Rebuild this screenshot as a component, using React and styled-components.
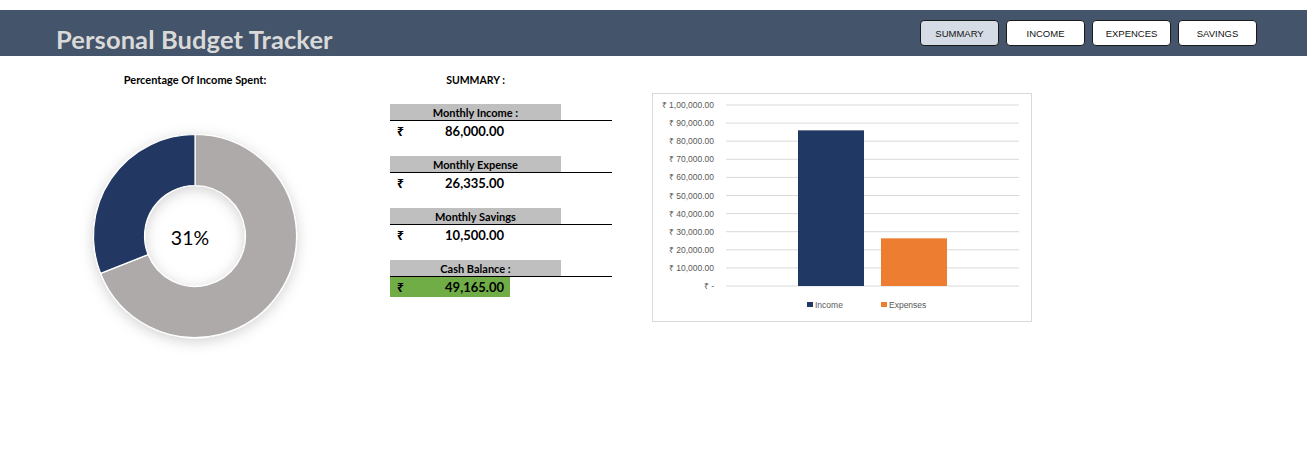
import React from 'react'
import styled, { createGlobalStyle } from 'styled-components';

const GlobalStyle = createGlobalStyle`
  body {
    margin: 0;
    background: #ffffff;
    font-family: Lato, "Open Sans", sans-serif;
    color: #000;
  }
`;

const Page = styled.div`
  width: 1307px;
  height: 473px;
  padding-top: 10px;
  box-sizing: border-box;
`;

const Header = styled.header`
  height: 46px;
  background-color: #44546a;
  display: flex;
  align-items: flex-start;
  justify-content: space-between;
  padding: 0 50px 0 56px;
  box-sizing: border-box;
`;

const Title = styled.h1`
  margin: 0;
  padding-top: 15px;
  font-size: 25.5px;
  line-height: 28px;
  font-weight: 700;
  color: #d9d9d9;
  letter-spacing: 0.1px;
`;

const Nav = styled.nav`
  display: flex;
  gap: 7px;
  padding-top: 10px;
`;

const NavButton = styled.button`
  width: 79px;
  height: 26px;
  padding: 0;
  border: 1px solid #1a1a1a;
  border-radius: 4px;
  background: ${p => (p.$active ? '#d6dce5' : '#ffffff')};
  font-family: "Liberation Sans", Arial, sans-serif;
  font-size: 9.5px;
  color: #111;
  cursor: pointer;
`;

const Main = styled.main`
  display: flex;
  align-items: flex-start;
  padding: 18px 0 0 80px;
`;

const DonutColumn = styled.section`
  width: 230px;
  display: flex;
  flex-direction: column;
  align-items: center;
`;

const SectionHeading = styled.div`
  font-size: ${p => p.$size || '10.5px'};
  line-height: 12px;
  font-weight: 700;
  text-align: center;
  width: ${p => p.$width || 'auto'};
`;

const DonutSvg = styled.svg`
  margin-top: 35px;
  overflow: visible;
`;

const SummaryColumn = styled.section`
  width: 222px;
  margin-left: 80px;
`;

const Blocks = styled.div`
  margin-top: 18px;
  display: flex;
  flex-direction: column;
  gap: 15px;
`;

const Block = styled.div`
  display: flex;
  flex-direction: column;
`;

const LabelRow = styled.div`
  border-bottom: 1px solid #000;
`;

const LabelCell = styled.div`
  width: 171px;
  height: 16px;
  background: #bfbfbf;
  font-size: 11px;
  line-height: 17px;
  font-weight: 700;
  text-align: center;
`;

const ValueCell = styled.div`
  width: 120px;
  height: 20px;
  display: flex;
  align-items: center;
  justify-content: space-between;
  padding: 0 6px 0 7px;
  box-sizing: border-box;
  background: ${p => (p.$highlight ? '#70ad47' : 'transparent')};
  font-size: 13px;
  font-weight: 700;
`;

const Rupee = styled.span`
  font-family: "Noto Sans", "DejaVu Sans", sans-serif;
  font-size: 12px;
  font-weight: 700;
`;

const ChartColumn = styled.section`
  margin-left: 40px;
  margin-top: 19px;
`;

const ChartBox = styled.div`
  width: 380px;
  height: 229px;
  border: 1px solid #d9d9d9;
  box-sizing: border-box;
`;

const polar = (cx, cy, r, deg) => {
  const a = (deg * Math.PI) / 180;
  return [cx + r * Math.sin(a), cy - r * Math.cos(a)];
};

const sector = (cx, cy, R, r, a0, a1) => {
  const large = a1 - a0 > 180 ? 1 : 0;
  const [x0, y0] = polar(cx, cy, R, a0);
  const [x1, y1] = polar(cx, cy, R, a1);
  const [x2, y2] = polar(cx, cy, r, a1);
  const [x3, y3] = polar(cx, cy, r, a0);
  return `M${x0} ${y0} A${R} ${R} 0 ${large} 1 ${x1} ${y1} L${x2} ${y2} A${r} ${r} 0 ${large} 0 ${x3} ${y3} Z`;
};

const Donut = ({ percent }) => {
  const split = 360 - (percent / 100) * 360;
  return (
    <DonutSvg width="230" height="230" viewBox="0 0 230 230">
      <defs>
        <filter id="glow" x="-25%" y="-25%" width="150%" height="150%">
          <feDropShadow dx="0" dy="3" stdDeviation="7" floodColor="#000" floodOpacity="0.18" />
        </filter>
      </defs>
      <g filter="url(#glow)">
        <path d={sector(115, 115, 101.5, 50.5, 0, split)} fill="#aeaaaa" stroke="#fff" strokeWidth="1.2" />
        <path d={sector(115, 115, 101.5, 50.5, split, 360)} fill="#203864" stroke="#fff" strokeWidth="1.2" />
      </g>
      <text x="110" y="124" textAnchor="middle" fontFamily="Lato, sans-serif" fontSize="19.5" fill="#000">
        {percent}%
      </text>
    </DonutSvg>
  );
};

const BarChart = ({ income, expenses }) => {
  const top = 11;
  const bottom = 192;
  const max = 100000;
  const y = v => bottom - (v / max) * (bottom - top);
  const ticks = [];
  for (let v = 0; v <= max; v += 10000) ticks.push(v);
  const fmt = v => (v === 0 ? '₹ -' : '₹ ' + v.toLocaleString('en-IN', { minimumFractionDigits: 2 }));
  return (
    <svg width="378" height="227" viewBox="0 0 378 227">
      {ticks.map(v => (
        <g key={v}>
          <line x1="73" x2="366" y1={y(v)} y2={y(v)} stroke="#d9d9d9" strokeWidth="1" />
          <text x="61" y={y(v) + 3} textAnchor="end" fontFamily="'Liberation Sans', Arial, sans-serif" fontSize="8.5" fill="#595959">
            {fmt(v)}
          </text>
        </g>
      ))}
      <rect x="145" y={y(income)} width="66" height={bottom - y(income)} fill="#203864" />
      <rect x="228" y={y(expenses)} width="66" height={bottom - y(expenses)} fill="#ed7d31" />
      <rect x="154" y="208" width="6" height="5" fill="#203864" />
      <text x="162" y="213.5" fontFamily="'Liberation Sans', Arial, sans-serif" fontSize="8.5" fill="#595959">Income</text>
      <rect x="228" y="208" width="6" height="5" fill="#ed7d31" />
      <text x="236" y="213.5" fontFamily="'Liberation Sans', Arial, sans-serif" fontSize="8.5" fill="#595959">Expenses</text>
    </svg>
  );
};

const summary = [
  { label: 'Monthly Income :', value: '86,000.00' },
  { label: 'Monthly Expense', value: '26,335.00' },
  { label: 'Monthly Savings', value: '10,500.00' },
  { label: 'Cash Balance :', value: '49,165.00', highlight: true },
];

const App = () => {
  return (
    <Page>
      <GlobalStyle />
      <Header>
        <Title>Personal Budget Tracker</Title>
        <Nav>
          <NavButton $active>SUMMARY</NavButton>
          <NavButton>INCOME</NavButton>
          <NavButton>EXPENCES</NavButton>
          <NavButton>SAVINGS</NavButton>
        </Nav>
      </Header>
      <Main>
        <DonutColumn>
          <SectionHeading $size="11px">Percentage Of Income Spent:</SectionHeading>
          <Donut percent={31} />
        </DonutColumn>
        <SummaryColumn>
          <SectionHeading $width="171px">SUMMARY :</SectionHeading>
          <Blocks>
            {summary.map(item => (
              <Block key={item.label}>
                <LabelRow>
                  <LabelCell>{item.label}</LabelCell>
                </LabelRow>
                <ValueCell $highlight={item.highlight}>
                  <Rupee>₹</Rupee>
                  <span>{item.value}</span>
                </ValueCell>
              </Block>
            ))}
          </Blocks>
        </SummaryColumn>
        <ChartColumn>
          <ChartBox>
            <BarChart income={86000} expenses={26335} />
          </ChartBox>
        </ChartColumn>
      </Main>
    </Page>
  );
};

export default App
